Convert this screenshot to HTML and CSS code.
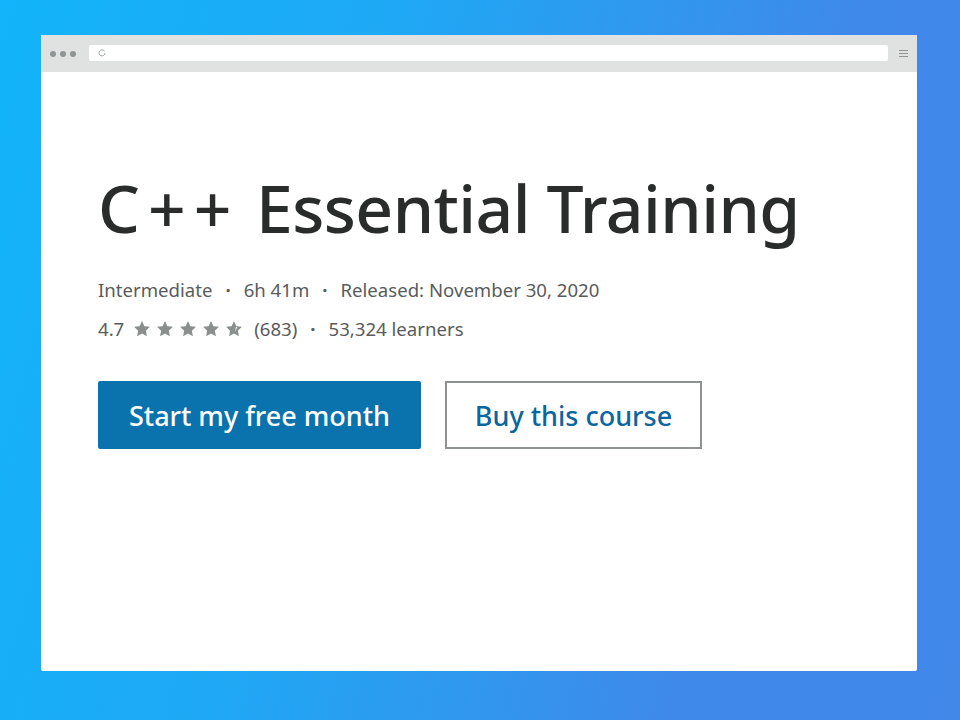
FILE: index.html
```html
<!DOCTYPE html>
<html lang="en">
<head>
<meta charset="utf-8">
<title>C++ Essential Training</title>
<link rel="stylesheet" href="styles.css">
</head>
<body>
<div class="window">
  <div class="chrome">
    <div class="dots"><span></span><span></span><span></span></div>
    <div class="address">
      <svg class="reload" width="8" height="8" viewBox="0 0 8 8"><path d="M6.5 2.2A3 3 0 1 0 7 4" fill="none" stroke="#9aa0a0" stroke-width="1"/></svg>
    </div>
    <svg class="menu" width="9" height="9" viewBox="0 0 9 9"><path d="M0 1.5h9M0 4.5h9M0 7.5h9" stroke="#8f9494" stroke-width="1.2"/></svg>
  </div>
  <main class="content">
    <h1 class="title"><span class="cpp">C++</span> Essential Training</h1>
    <p class="meta info">Intermediate<span class="dot">·</span>6h 41m<span class="dot">·</span>Released: November 30, 2020</p>
    <p class="meta rating">4.7
      <span class="stars">
        <svg viewBox="0 0 24 24"><path d="M12 2.5l2.9 6.1 6.6.8-4.9 4.6 1.3 6.6L12 17.3l-5.9 3.3 1.3-6.6-4.9-4.6 6.6-.8z"/></svg>
        <svg viewBox="0 0 24 24"><path d="M12 2.5l2.9 6.1 6.6.8-4.9 4.6 1.3 6.6L12 17.3l-5.9 3.3 1.3-6.6-4.9-4.6 6.6-.8z"/></svg>
        <svg viewBox="0 0 24 24"><path d="M12 2.5l2.9 6.1 6.6.8-4.9 4.6 1.3 6.6L12 17.3l-5.9 3.3 1.3-6.6-4.9-4.6 6.6-.8z"/></svg>
        <svg viewBox="0 0 24 24"><path d="M12 2.5l2.9 6.1 6.6.8-4.9 4.6 1.3 6.6L12 17.3l-5.9 3.3 1.3-6.6-4.9-4.6 6.6-.8z"/></svg>
        <svg viewBox="0 0 24 24"><path d="M12 2.5l2.9 6.1 6.6.8-4.9 4.6 1.3 6.6L12 17.3l-5.9 3.3 1.3-6.6-4.9-4.6 6.6-.8z"/><path class="cut" d="M14.2 9.5l1.6.2-2.3 5.5z"/></svg>
      </span>
      <span class="count">(683)</span><span class="dot">·</span>53,324 learners</p>
    <div class="actions">
      <button class="btn primary">Start my free month</button>
      <button class="btn secondary">Buy this course</button>
    </div>
  </main>
</div>
</body>
</html>
```
FILE: styles.css
```css
html, body {
  margin: 0;
  height: 100%;
}
body {
  background: linear-gradient(105deg, #12b4fa 0%, #1fa8f5 35%, #3f89ea 75%, #4188e9 100%);
  font-family: "Noto Sans", "Open Sans", sans-serif;
  padding: 35px 43px 49px 41px;
  box-sizing: border-box;
}
.window {
  background: #fff;
  height: 636px;
  display: flex;
  flex-direction: column;
  border-radius: 2px;
}
.chrome {
  height: 37px;
  background: #dfe2e1;
  display: flex;
  align-items: center;
  padding: 0 9px 0 9px;
  gap: 13px;
}
.dots {
  display: flex;
  gap: 4px;
}
.dots span {
  width: 6px;
  height: 6px;
  border-radius: 50%;
  background: #8f9595;
}
.address {
  flex: 1;
  height: 16px;
  background: #fff;
  border-radius: 2px;
  display: flex;
  align-items: center;
  padding-left: 9px;
  margin-top: -1px;
}
.menu {
  margin: 0 0 0 -2px;
}
.content {
  padding: 95px 57px 0 57px;
}
.title {
  margin: 0;
  font-size: 66px;
  font-weight: 500;
  color: #2a2b2b;
  line-height: 80px;
  letter-spacing: -0.55px;
}
.cpp {
  letter-spacing: 8px;
}
.meta {
  margin: 0;
  font-size: 18.6px;
  color: #595b5b;
  line-height: 39px;
}
.info {
  margin-top: 23px;
}
.dot {
  display: inline-block;
  margin: 0 13px;
  font-weight: 700;
}
.rating {
  display: flex;
  align-items: center;
}
.stars {
  display: inline-flex;
  gap: 3px;
  margin: 0 10px 0 8px;
}
.stars svg {
  width: 20px;
  height: 20px;
  fill: #8a8f8e;
}
.stars .cut {
  fill: #fff;
}
.actions {
  display: flex;
  gap: 24px;
  margin-top: 33px;
}
.btn {
  font-family: inherit;
  font-size: 27px;
  font-weight: 500;
  height: 68px;
  box-sizing: border-box;
  cursor: pointer;
}
.primary {
  background: #0a73ae;
  color: #fff;
  border: 0;
  border-radius: 2px;
  width: 323px;
}
.secondary {
  background: #fff;
  color: #0b66a0;
  border: 2px solid #8e9292;
  width: 257px;
}
```
